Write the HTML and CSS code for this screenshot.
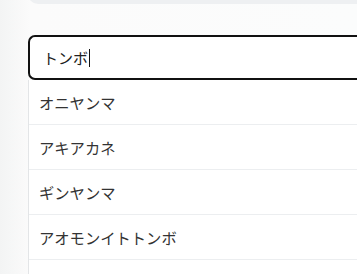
FILE: index.html
```html
<!DOCTYPE html>
<html lang="ja">
<head>
  <meta charset="UTF-8" />
  <title>トンボ検索</title>
  <meta name="viewport" content="width=device-width, initial-scale=1.0"/>
  <link rel="stylesheet" href="styles.css">
</head>
<body>

  <!-- top card, only its bottom edge is visible -->
  <div class="top-card"></div>

  <!-- SEARCH -->
  <div class="search">
    <div class="search-box">
      <span class="query">トンボ</span><span class="caret"></span>
    </div>
    <ul class="results">
      <li>オニヤンマ</li>
      <li>アキアカネ</li>
      <li>ギンヤンマ</li>
      <li>アオモンイトトンボ</li>
      <li></li>
    </ul>
  </div>

</body>
</html>
```

FILE: styles.css
```css
body {
  margin: 0;
  height: 274px;
  overflow: hidden;
  font-family: "Noto Sans CJK JP", "Noto Sans", sans-serif;
  background: linear-gradient(to right, #f3f4f4, #fbfbfb 30px, #fbfcfc);
  color: #333;
}

.top-card {
  margin-left: 28px;
  margin-top: -20px;
  height: 24px;
  background: #eef0f2;
  border-radius: 0 0 0 10px;
}

.search {
  margin-top: 31px;
  margin-left: 28px;
}

.search-box {
  height: 41px;
  display: flex;
  align-items: center;
  padding-left: 13px;
  border: 2px solid #111;
  border-right: none;
  border-radius: 7px 0 0 7px;
  background: #fff;
  font-size: 15px;
  color: #222;
}

.caret {
  display: inline-block;
  width: 1px;
  height: 18px;
  background: #111;
  margin-left: 1px;
}

.results {
  list-style: none;
  margin: 0;
  padding: 0;
  background: #fff;
  border-left: 1px solid #e3e5e7;
}

.results li {
  height: 44px;
  line-height: 44px;
  padding-left: 10px;
  font-size: 15.3px;
  color: #333;
  border-bottom: 1px solid #eceef0;
}
```
